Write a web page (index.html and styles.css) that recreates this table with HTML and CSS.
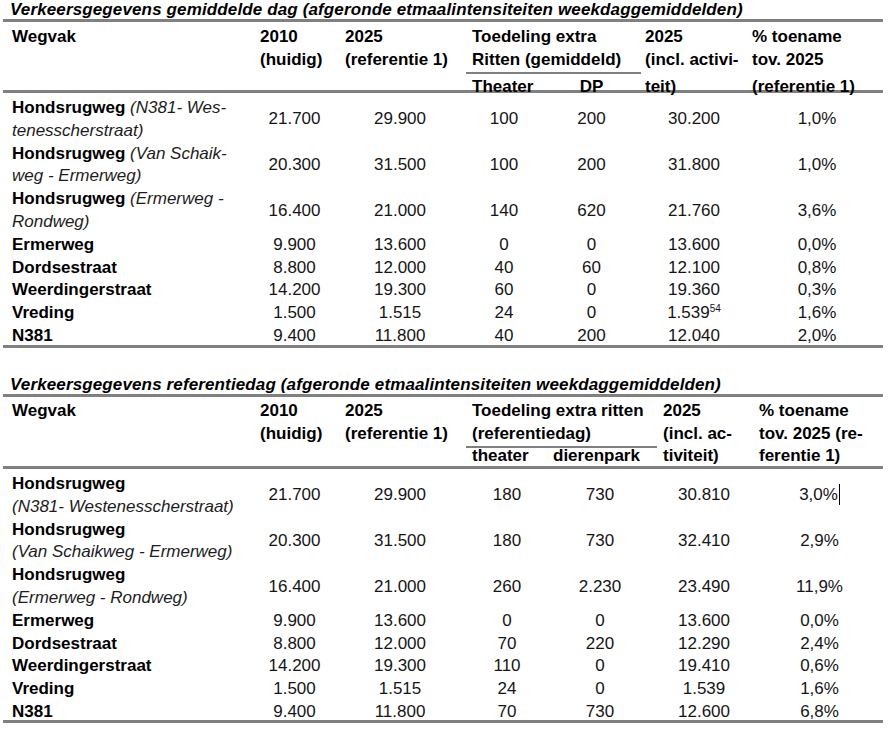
FILE: index.html
```html
<!DOCTYPE html>
<html lang="nl">
<head>
<meta charset="utf-8">
<title>Verkeersgegevens</title>
<link rel="stylesheet" href="styles.css">
</head>
<body>
<div class="page">
  <section class="block t1">
    <div class="caption">Verkeersgegevens gemiddelde dag (afgeronde etmaalintensiteiten weekdaggemiddelden)</div>
    <div class="thead">
      <div class="hrow ra">
        <div class="h c1">Wegvak</div>
        <div class="h c2">2010<br>(huidig)</div>
        <div class="h c3">2025<br>(referentie 1)</div>
        <div class="h c4 span2">Toedeling extra<br>Ritten (gemiddeld)</div>
        <div class="h c6">2025<br>(incl. activi-</div>
        <div class="h c7">% toename<br>tov. 2025</div>
      </div>
      <div class="hrow rb">
        <div class="h c1"></div>
        <div class="h c2"></div>
        <div class="h c3"></div>
        <div class="h c4">Theater</div>
        <div class="h c5 center">DP</div>
        <div class="h c6">teit)</div>
        <div class="h c7">(referentie 1)</div>
      </div>
    </div>
    <div class="tbody">
      <div class="row"><div class="name"><b>Hondsrugweg</b> <i>(N381- Wes-</i><br><i>tenesscherstraat)</i></div><div class="v">21.700</div><div class="v">29.900</div><div class="v">100</div><div class="v">200</div><div class="v">30.200</div><div class="v last">1,0%</div></div>
      <div class="row"><div class="name"><b>Hondsrugweg</b> <i>(Van Schaik-</i><br><i>weg - Ermerweg)</i></div><div class="v">20.300</div><div class="v">31.500</div><div class="v">100</div><div class="v">200</div><div class="v">31.800</div><div class="v last">1,0%</div></div>
      <div class="row"><div class="name"><b>Hondsrugweg</b> <i>(Ermerweg -</i><br><i>Rondweg)</i></div><div class="v">16.400</div><div class="v">21.000</div><div class="v">140</div><div class="v">620</div><div class="v">21.760</div><div class="v last">3,6%</div></div>
      <div class="row"><div class="name"><b>Ermerweg</b></div><div class="v">9.900</div><div class="v">13.600</div><div class="v">0</div><div class="v">0</div><div class="v">13.600</div><div class="v last">0,0%</div></div>
      <div class="row"><div class="name"><b>Dordsestraat</b></div><div class="v">8.800</div><div class="v">12.000</div><div class="v">40</div><div class="v">60</div><div class="v">12.100</div><div class="v last">0,8%</div></div>
      <div class="row"><div class="name"><b>Weerdingerstraat</b></div><div class="v">14.200</div><div class="v">19.300</div><div class="v">60</div><div class="v">0</div><div class="v">19.360</div><div class="v last">0,3%</div></div>
      <div class="row"><div class="name"><b>Vreding</b></div><div class="v">1.500</div><div class="v">1.515</div><div class="v">24</div><div class="v">0</div><div class="v">1.539<sup class="note">54</sup></div><div class="v last">1,6%</div></div>
      <div class="row"><div class="name"><b>N381</b></div><div class="v">9.400</div><div class="v">11.800</div><div class="v">40</div><div class="v">200</div><div class="v">12.040</div><div class="v last">2,0%</div></div>
    </div>
  </section>

  <section class="block t2">
    <div class="caption">Verkeersgegevens referentiedag (afgeronde etmaalintensiteiten weekdaggemiddelden)</div>
    <div class="thead">
      <div class="hrow ra">
        <div class="h c1">Wegvak</div>
        <div class="h c2">2010<br>(huidig)</div>
        <div class="h c3">2025<br>(referentie 1)</div>
        <div class="h c4 span2">Toedeling extra ritten<br>(referentiedag)</div>
        <div class="h c6">2025<br>(incl. ac-</div>
        <div class="h c7">% toename<br>tov. 2025 (re-</div>
      </div>
      <div class="hrow rb">
        <div class="h c1"></div>
        <div class="h c2"></div>
        <div class="h c3"></div>
        <div class="h c4">theater</div>
        <div class="h c5">dierenpark</div>
        <div class="h c6">tiviteit)</div>
        <div class="h c7">ferentie 1)</div>
      </div>
    </div>
    <div class="tbody">
      <div class="row"><div class="name"><b>Hondsrugweg</b><br><i>(N381- Westenesscherstraat)</i></div><div class="v">21.700</div><div class="v">29.900</div><div class="v">180</div><div class="v">730</div><div class="v">30.810</div><div class="v last">3,0%<span class="caret"></span></div></div>
      <div class="row"><div class="name"><b>Hondsrugweg</b><br><i>(Van Schaikweg - Ermerweg)</i></div><div class="v">20.300</div><div class="v">31.500</div><div class="v">180</div><div class="v">730</div><div class="v">32.410</div><div class="v last">2,9%</div></div>
      <div class="row"><div class="name"><b>Hondsrugweg</b><br><i>(Ermerweg - Rondweg)</i></div><div class="v">16.400</div><div class="v">21.000</div><div class="v">260</div><div class="v">2.230</div><div class="v">23.490</div><div class="v last">11,9%</div></div>
      <div class="row"><div class="name"><b>Ermerweg</b></div><div class="v">9.900</div><div class="v">13.600</div><div class="v">0</div><div class="v">0</div><div class="v">13.600</div><div class="v last">0,0%</div></div>
      <div class="row"><div class="name"><b>Dordsestraat</b></div><div class="v">8.800</div><div class="v">12.000</div><div class="v">70</div><div class="v">220</div><div class="v">12.290</div><div class="v last">2,4%</div></div>
      <div class="row"><div class="name"><b>Weerdingerstraat</b></div><div class="v">14.200</div><div class="v">19.300</div><div class="v">110</div><div class="v">0</div><div class="v">19.410</div><div class="v last">0,6%</div></div>
      <div class="row"><div class="name"><b>Vreding</b></div><div class="v">1.500</div><div class="v">1.515</div><div class="v">24</div><div class="v">0</div><div class="v">1.539</div><div class="v last">1,6%</div></div>
      <div class="row"><div class="name"><b>N381</b></div><div class="v">9.400</div><div class="v">11.800</div><div class="v">70</div><div class="v">730</div><div class="v">12.600</div><div class="v last">6,8%</div></div>
    </div>
  </section>
</div>
</body>
</html>
```

FILE: styles.css
```css
* {
  box-sizing: border-box;
  margin: 0;
  padding: 0;
}

html, body {
  background: #ffffff;
}

body {
  margin: 0;
  font-family: "Liberation Sans", Arial, sans-serif;
  font-size: 17px;
  color: #151515;
}

.page {
  width: 883px;
  padding-left: 3px;
}

.block + .block {
  margin-top: 27px;
}

.t1 {
  --cols: 252px 79px 132px 76px 99px 106px 136px;
}

.t2 {
  --cols: 252px 79px 132px 82px 104px 104px 127px;
}

.caption {
  height: 22px;
  line-height: 19px;
  padding-left: 7px;
  font-weight: bold;
  font-style: italic;
  letter-spacing: 0.13px;
  color: #000;
  white-space: nowrap;
  border-bottom: 3px solid #808080;
}

.thead {
  border-bottom: 3px solid #808080;
  font-weight: bold;
  color: #000;
  line-height: 22.8px;
}

.hrow {
  display: grid;
  grid-template-columns: var(--cols);
}

.h {
  white-space: nowrap;
}

.span2 {
  grid-column: span 2;
  border-bottom: 2px solid #808080;
}

.h.center {
  text-align: center;
}

.h.c1 { padding-left: 9px; }
.h.c2 { padding-left: 5px; }
.h.c3 { padding-left: 11px; }
.h.c4 { padding-left: 6px; }

/* upper table header */
.t1 .ra { height: 47px; }
.t1 .ra .h { padding-top: 4px; }
.t1 .rb { height: 21px; }
.t1 .rb .h { padding-top: 7px; }
.t1 .h.c6 { padding-left: 4px; }
.t1 .h.c7 { padding-left: 5px; }

/* lower table header */
.t2 .ra { height: 48px; }
.t2 .ra .h { padding-top: 3px; }
.t2 .rb { height: 21px; }
.t2 .h.c5 { padding-left: 5px; }
.t2 .h.c6 { padding-left: 11px; }
.t2 .h.c7 { padding-left: 3px; }
.t2 .span2 { margin-right: -5px; }

.tbody {
  padding-top: 4px;
  border-bottom: 3px solid #808080;
  line-height: 22.8px;
}

.t1 .tbody { height: 255px; }
.t2 .tbody { height: 254px; }

.row {
  display: grid;
  grid-template-columns: var(--cols);
}

.name {
  padding-left: 9px;
  white-space: nowrap;
}

.name b {
  font-weight: bold;
  color: #000;
}

.name i {
  font-style: italic;
  color: #1c1c1c;
}

.v {
  align-self: center;
  text-align: center;
  white-space: nowrap;
}

.t1 .v.last {
  padding-left: 4px;
}

.note {
  font-size: 10px;
  line-height: 0;
  vertical-align: 6px;
}

.caret {
  display: inline-block;
  width: 1px;
  height: 21px;
  margin-left: 1px;
  vertical-align: -5px;
  background: #000;
}
```
